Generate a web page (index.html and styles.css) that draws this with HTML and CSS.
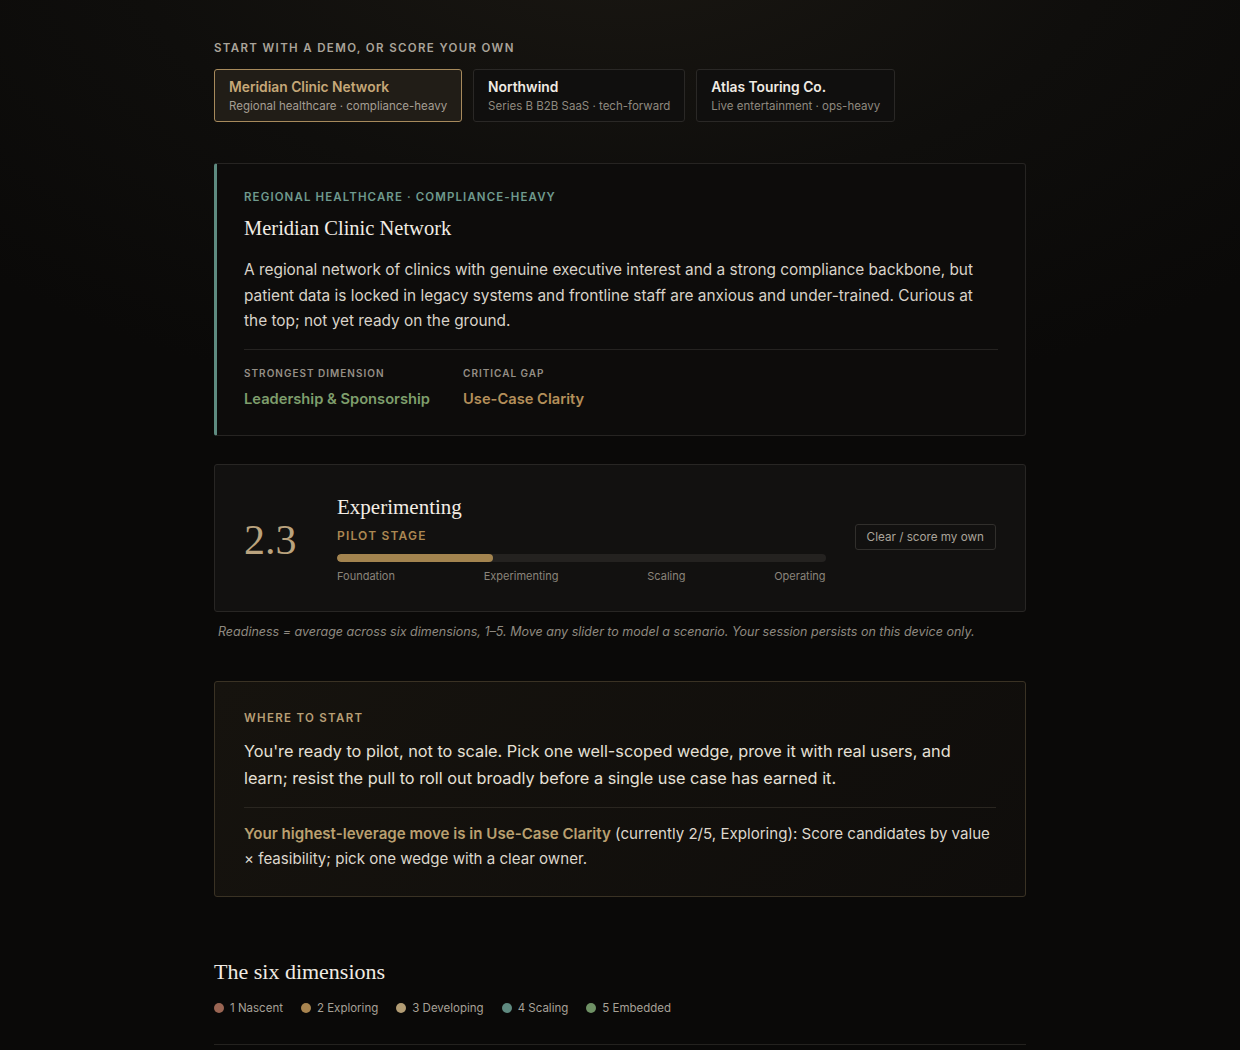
FILE: index.html
```html
<!DOCTYPE html>
<html lang="en">
<head>
<meta charset="utf-8">
<title>AI Readiness</title>
<link rel="stylesheet" href="styles.css">
</head>
<body>
<main class="page">
  <section class="demos">
    <div class="eyebrow">Start with a demo, or score your own</div>
    <div class="demo-list">
      <button class="demo active">
        <span class="demo-title">Meridian Clinic Network</span>
        <span class="demo-sub">Regional healthcare · compliance-heavy</span>
      </button>
      <button class="demo">
        <span class="demo-title">Northwind</span>
        <span class="demo-sub">Series B B2B SaaS · tech-forward</span>
      </button>
      <button class="demo">
        <span class="demo-title">Atlas Touring Co.</span>
        <span class="demo-sub">Live entertainment · ops-heavy</span>
      </button>
    </div>
  </section>

  <section class="profile">
    <div class="profile-eyebrow">Regional healthcare · compliance-heavy</div>
    <h2 class="profile-title">Meridian Clinic Network</h2>
    <p class="profile-text">A regional network of clinics with genuine executive interest and a strong compliance backbone, but patient data is locked in legacy systems and frontline staff are anxious and under-trained. Curious at the top; not yet ready on the ground.</p>
    <div class="profile-stats">
      <div class="stat">
        <div class="stat-label">Strongest dimension</div>
        <div class="stat-value strong">Leadership &amp; Sponsorship</div>
      </div>
      <div class="stat">
        <div class="stat-label">Critical gap</div>
        <div class="stat-value gap">Use-Case Clarity</div>
      </div>
    </div>
  </section>

  <section class="score">
    <div class="score-num">2.3</div>
    <div class="score-main">
      <div class="score-stage">Experimenting</div>
      <div class="score-sub">Pilot stage</div>
      <div class="track"><div class="fill" style="width:32%"></div></div>
      <div class="stages">
        <span>Foundation</span><span>Experimenting</span><span>Scaling</span><span>Operating</span>
      </div>
    </div>
    <button class="clear">Clear / score my own</button>
  </section>
  <p class="note">Readiness = average across six dimensions, 1–5. Move any slider to model a scenario. Your session persists on this device only.</p>

  <section class="start">
    <div class="start-eyebrow">Where to start</div>
    <p class="start-text">You're ready to pilot, not to scale. Pick one well-scoped wedge, prove it with real users, and learn; resist the pull to roll out broadly before a single use case has earned it.</p>
    <p class="start-move"><span class="hl">Your highest-leverage move is in Use-Case Clarity</span> (currently 2/5, Exploring): Score candidates by value × feasibility; pick one wedge with a clear owner.</p>
  </section>

  <section class="dims">
    <h2 class="dims-title">The six dimensions</h2>
    <ul class="legend">
      <li><span class="dot d1"></span>1 Nascent</li>
      <li><span class="dot d2"></span>2 Exploring</li>
      <li><span class="dot d3"></span>3 Developing</li>
      <li><span class="dot d4"></span>4 Scaling</li>
      <li><span class="dot d5"></span>5 Embedded</li>
    </ul>
    <div class="dims-rule"></div>
  </section>
</main>
</body>
</html>
```

FILE: styles.css
```css
* { box-sizing: border-box; }

html, body {
  margin: 0;
  padding: 0;
}

body {
  background: #0a0908;
  background-image: radial-gradient(ellipse 900px 500px at 50% -80px, #1a1712 0%, #0f0e0c 55%, #0a0908 100%);
  background-repeat: no-repeat;
  color: #e6e0d6;
  font-family: Inter, "Noto Sans", sans-serif;
  min-height: 1050px;
}

.page {
  width: 812px;
  margin: 0 auto;
  padding-top: 42px;
}

.eyebrow {
  font-size: 11.5px;
  font-weight: 600;
  letter-spacing: 1.35px;
  text-transform: uppercase;
  color: #aaa49a;
  line-height: 12px;
}

.demo-list {
  display: flex;
  gap: 11px;
  margin-top: 15px;
}

.demo {
  display: flex;
  flex-direction: column;
  align-items: flex-start;
  gap: 2px;
  height: 53px;
  padding: 8px 14px 0 14px;
  background: #100f0e;
  border: 1px solid #2a2826;
  border-radius: 3px;
  font-family: inherit;
  text-align: left;
  cursor: pointer;
}

.demo.active {
  background: #211d17;
  border-color: #a78a5c;
}

.demo-title {
  font-size: 13.8px;
  font-weight: 600;
  color: #f0ebe3;
  line-height: 18px;
}

.demo.active .demo-title { color: #c6a878; }

.demo-sub {
  font-size: 11.5px;
  color: #8f897f;
  line-height: 16px;
}

.demo.active .demo-sub { color: #a59e93; }

.profile {
  margin-top: 41px;
  background: #0d0c0b;
  border: 1px solid #262422;
  border-left: 3px solid #5e8b80;
  border-radius: 3px;
  padding: 26px 27px 26px 27px;
}

.profile-eyebrow {
  font-size: 11.5px;
  font-weight: 600;
  letter-spacing: 1.1px;
  text-transform: uppercase;
  color: #6f9a8e;
  line-height: 14px;
}

.profile-title {
  margin: 10px 0 0;
  font-family: "Liberation Serif", "DejaVu Serif", serif;
  font-weight: 400;
  font-size: 20.5px;
  line-height: 28px;
  color: #f2ede5;
}

.profile-text {
  margin: 15px 0 0;
  font-size: 15.4px;
  line-height: 25.5px;
  color: #d9d3c9;
}

.profile-stats {
  display: flex;
  gap: 33px;
  margin-top: 15px;
  padding-top: 17px;
  border-top: 1px solid #252321;
}

.stat-label {
  font-size: 10px;
  font-weight: 600;
  letter-spacing: 1px;
  text-transform: uppercase;
  color: #958f86;
  line-height: 12px;
}

.stat-value {
  margin-top: 10px;
  font-size: 14.7px;
  font-weight: 600;
  line-height: 20px;
}

.stat-value.strong { color: #7e9e6c; }
.stat-value.gap { color: #b48f5a; }

.score {
  margin-top: 28px;
  display: flex;
  align-items: center;
  background: #121110;
  border: 1px solid #282624;
  border-radius: 3px;
  padding: 28px 29px 28px 29px;
}

.score-num {
  width: 93px;
  flex: none;
  font-family: "Liberation Serif", "DejaVu Serif", serif;
  font-size: 42px;
  line-height: 50px;
  color: #baa37e;
  padding-top: 4px;
}

.score-main {
  flex: 1;
}

.score-stage {
  font-family: "Liberation Serif", "DejaVu Serif", serif;
  font-size: 21px;
  line-height: 28px;
  color: #f2ede5;
}

.score-sub {
  margin-top: 8px;
  font-size: 12px;
  font-weight: 600;
  letter-spacing: 1.2px;
  text-transform: uppercase;
  color: #ab8752;
  line-height: 14px;
}

.track {
  margin-top: 11px;
  height: 8px;
  background: #242220;
  border-radius: 4px;
  overflow: hidden;
}

.fill {
  height: 100%;
  background: #a3844f;
  border-radius: 4px;
}

.stages {
  display: flex;
  justify-content: space-between;
  margin-top: 7px;
  font-size: 11px;
  line-height: 14px;
  color: #8a847b;
}

.clear {
  flex: none;
  margin-left: 29px;
  margin-bottom: 2px;
  height: 26px;
  padding: 0 11px;
  background: #121110;
  border: 1px solid #312f2c;
  border-radius: 3px;
  font-family: inherit;
  font-size: 11.7px;
  color: #aaa49a;
  cursor: pointer;
}

.note {
  margin: 12px 0 0 4px;
  font-size: 12.5px;
  font-style: italic;
  line-height: 16px;
  color: #8f8980;
}

.start {
  margin-top: 41px;
  background: linear-gradient(135deg, #16130e 0%, #0f0d0b 100%);
  border: 1px solid #3a3224;
  border-radius: 3px;
  padding: 29px 29px 25px 29px;
}

.start-eyebrow {
  font-size: 11.5px;
  font-weight: 600;
  letter-spacing: 1.3px;
  text-transform: uppercase;
  color: #b89f76;
  line-height: 14px;
}

.start-text {
  margin: 13px 0 0;
  font-size: 16.3px;
  line-height: 27px;
  color: #e6e0d6;
}

.start-move {
  margin: 15px 0 0;
  padding-top: 13px;
  border-top: 1px solid #2a2620;
  font-size: 15.1px;
  line-height: 25px;
  color: #ddd7cc;
}

.start-move .hl {
  font-weight: 600;
  color: #baa070;
}

.dims {
  margin-top: 60px;
}

.dims-title {
  margin: 0;
  font-family: "Liberation Serif", "DejaVu Serif", serif;
  font-weight: 400;
  font-size: 22px;
  line-height: 30px;
  color: #f0ebe3;
}

.legend {
  display: flex;
  gap: 18px;
  list-style: none;
  margin: 13px 0 0;
  padding: 0;
  font-size: 11.5px;
  line-height: 16px;
  color: #a7a197;
}

.legend li {
  display: flex;
  align-items: center;
  gap: 6px;
}

.dot {
  width: 10px;
  height: 10px;
  border-radius: 50%;
  display: inline-block;
}

.d1 { background: #9a6553; }
.d2 { background: #a8844f; }
.d3 { background: #b29c74; }
.d4 { background: #5f8a80; }
.d5 { background: #6f9165; }

.dims-rule {
  margin-top: 28px;
  border-top: 1px solid #24221f;
}
```
